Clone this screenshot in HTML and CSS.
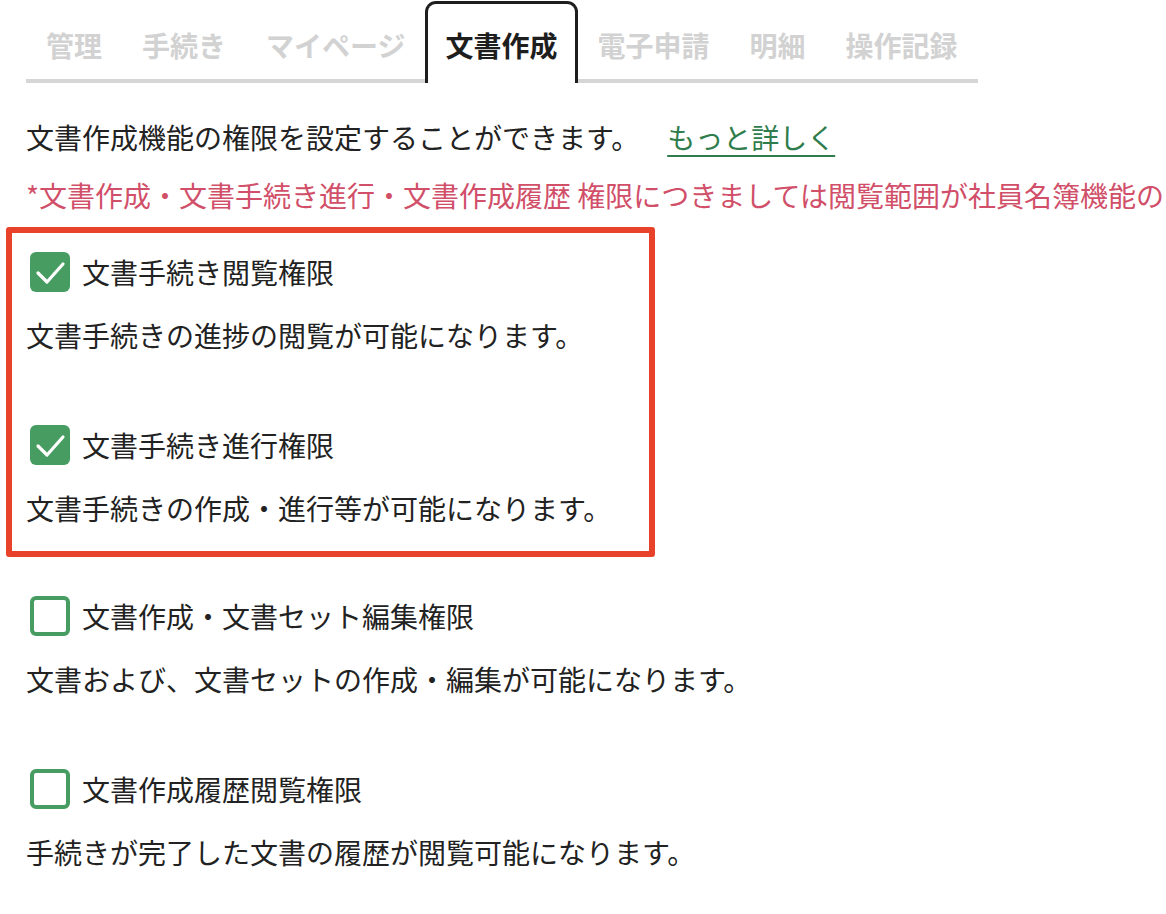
FILE: index.html
```html
<!DOCTYPE html>
<html lang="ja">
<head>
<meta charset="utf-8">
<title>文書作成</title>
<link rel="stylesheet" href="styles.css">
</head>
<body>
<div class="page">
  <nav class="tabs">
    <div class="tab">管理</div>
    <div class="tab">手続き</div>
    <div class="tab">マイページ</div>
    <div class="tab active">文書作成</div>
    <div class="tab">電子申請</div>
    <div class="tab">明細</div>
    <div class="tab">操作記録</div>
  </nav>

  <p class="intro">文書作成機能の権限を設定することができます。<a class="more" href="#">もっと詳しく</a></p>
  <p class="note">*文書作成・文書手続き進行・文書作成履歴 権限につきましては閲覧範囲が社員名簿機能の</p>

  <div class="highlight">
    <div class="perm">
      <label class="row">
        <span class="box checked"><svg viewBox="0 0 40 40" width="40" height="40"><path d="M8 21 L17 30 L33 12" fill="none" stroke="#fff" stroke-width="3.2" stroke-linecap="round" stroke-linejoin="round"/></svg></span>
        <span class="label">文書手続き閲覧権限</span>
      </label>
      <p class="desc">文書手続きの進捗の閲覧が可能になります。</p>
    </div>
    <div class="perm">
      <label class="row">
        <span class="box checked"><svg viewBox="0 0 40 40" width="40" height="40"><path d="M8 21 L17 30 L33 12" fill="none" stroke="#fff" stroke-width="3.2" stroke-linecap="round" stroke-linejoin="round"/></svg></span>
        <span class="label">文書手続き進行権限</span>
      </label>
      <p class="desc">文書手続きの作成・進行等が可能になります。</p>
    </div>
  </div>

  <div class="plain">
    <div class="perm">
      <label class="row">
        <span class="box"></span>
        <span class="label">文書作成・文書セット編集権限</span>
      </label>
      <p class="desc">文書および、文書セットの作成・編集が可能になります。</p>
    </div>
    <div class="perm">
      <label class="row">
        <span class="box"></span>
        <span class="label">文書作成履歴閲覧権限</span>
      </label>
      <p class="desc">手続きが完了した文書の履歴が閲覧可能になります。</p>
    </div>
  </div>
</div>
</body>
</html>
```

FILE: styles.css
```css
html, body {
  margin: 0;
  padding: 0;
  background: #fff;
  overflow: hidden;
}

body {
  font-family: "Noto Sans CJK JP", "Noto Sans", sans-serif;
  color: #222;
  font-size: 28px;
}

.page {
  padding: 1px 0 0 26px;
  width: 1140px;
  overflow: hidden;
}

.tabs {
  display: inline-flex;
  border-bottom: 4px solid #d6d6d6;
}

.tab {
  padding: 30px 20px 20px;
  line-height: 28px;
  font-weight: 700;
  color: #d2d2d2;
  white-space: nowrap;
}

.tab.active {
  color: #1e1e1e;
  background: #fff;
  border: 3px solid #1e1e1e;
  border-bottom: none;
  border-radius: 11px 11px 0 0;
  padding: 27px 17px 24px;
  margin-bottom: -4px;
}

p {
  margin: 0;
}

.intro {
  margin-top: 34px;
  line-height: 40px;
  white-space: nowrap;
}

.more {
  margin-left: 28px;
  color: #2f7d4c;
  text-decoration: underline;
  text-decoration-thickness: 2px;
  text-underline-offset: 6px;
}

.note {
  margin-top: 18px;
  line-height: 40px;
  color: #d14f69;
  white-space: nowrap;
}

.highlight {
  box-sizing: border-box;
  width: 649px;
  margin: 12px 0 0 -20px;
  border: 6px solid #e8432a;
  border-radius: 3px;
  padding: 19px 14px 23px;
}

.plain {
  margin-top: 39px;
}

.perm + .perm {
  margin-top: 70px;
}

.row {
  display: flex;
  align-items: center;
  height: 40px;
}

.box {
  box-sizing: border-box;
  width: 40px;
  height: 40px;
  margin-left: 4px;
  margin-right: 12px;
  border: 4px solid #479c62;
  border-radius: 6px;
  background: #fff;
  flex: none;
}

.box.checked {
  border: none;
  background: #479c62;
}

.box svg {
  display: block;
}

.label {
  line-height: 40px;
}

.desc {
  margin-top: 23px;
  line-height: 40px;
  white-space: nowrap;
}
```
